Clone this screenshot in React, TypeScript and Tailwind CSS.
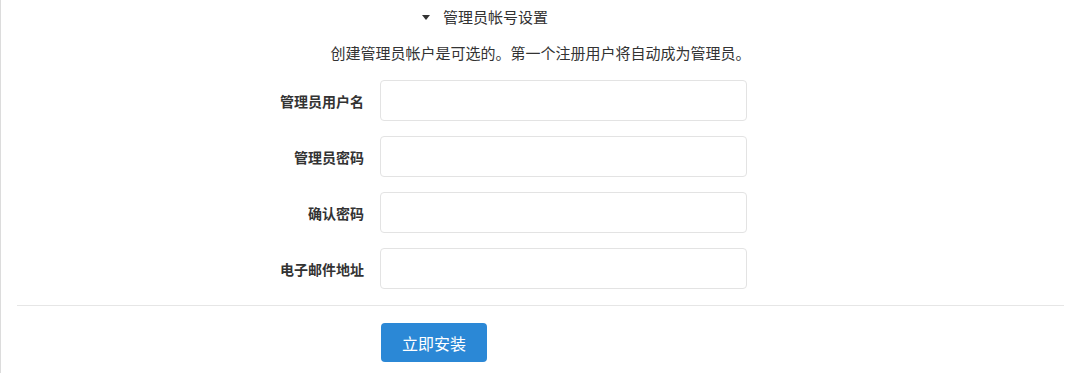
import { useState } from "react";

const fields = [
  { label: "管理员用户名", name: "username", type: "text" },
  { label: "管理员密码", name: "password", type: "password" },
  { label: "确认密码", name: "confirm", type: "password" },
  { label: "电子邮件地址", name: "email", type: "email" },
];

export default function App() {
  const [open, setOpen] = useState(true);

  return (
    <div className="min-h-screen border-l border-[#dcdcdc] bg-white px-4 text-[#333] font-['Noto_Sans_CJK_SC','Noto_Sans',sans-serif]">
      <button
        type="button"
        onClick={() => setOpen(!open)}
        className="flex items-center gap-[13px] pl-[405px] pt-[6px] text-[15px] leading-[22px]"
      >
        <span className="h-0 w-0 border-x-4 border-t-[5px] border-x-transparent border-t-[#333]" />
        <span>管理员帐号设置</span>
      </button>

      {open && (
        <>
          <p className="mt-[14px] text-center text-[15px] leading-[22px]">
            创建管理员帐户是可选的。第一个注册用户将自动成为管理员。
          </p>

          <div className="mt-4 flex flex-col gap-[15px]">
            {fields.map((f) => (
              <div key={f.name} className="flex items-center gap-4">
                <label
                  htmlFor={f.name}
                  className="w-[347px] text-right text-[14px] font-bold leading-5"
                >
                  {f.label}
                </label>
                <input
                  id={f.name}
                  type={f.type}
                  className="h-[41px] w-[367px] rounded-[4px] border border-[#e3e3e3] bg-white px-3 text-sm outline-none"
                />
              </div>
            ))}
          </div>
        </>
      )}

      <div className="mt-4 border-t border-[#e6e6e6]" />

      <div className="mt-[17px] pl-[364px]">
        <button
          type="button"
          className="h-[39px] w-[106px] rounded-[4px] bg-[#2b88d6] text-[16px] text-white"
        >
          立即安装
        </button>
      </div>
    </div>
  );
}
